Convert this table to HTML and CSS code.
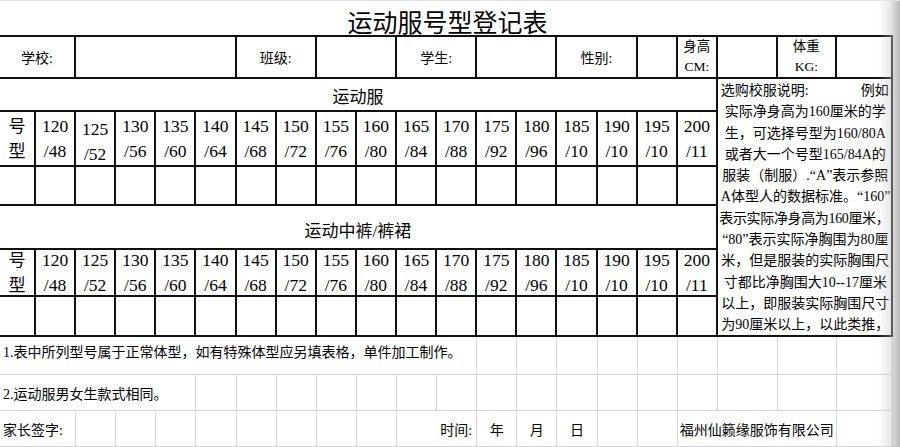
FILE: index.html
```html
<!DOCTYPE html>
<html lang="zh-CN">
<head>
<meta charset="utf-8">
<title>运动服号型登记表</title>
<link rel="stylesheet" href="styles.css">
</head>
<body>
<div class="page">
  <div class="sheet">
    <div class="title">运动服号型登记表</div>

    <div class="c b s2 lbl">学校:</div>
    <div class="c b s4"></div>
    <div class="c b s2 lbl">班级:</div>
    <div class="c b s2"></div>
    <div class="c b s2 lbl">学生:</div>
    <div class="c b s2"></div>
    <div class="c b s2 lbl">性别:</div>
    <div class="c b"></div>
    <div class="c b two"><span>身高</span><span>CM:</span></div>
    <div class="c b"></div>
    <div class="c b two"><span>体重</span><span>KG:</span></div>
    <div class="c b"></div>

    <div class="panel">
      <div class="pl first"><span>选购校服说明:</span><span>例如</span></div>
      <div class="pl">实际净身高为160厘米的学</div>
      <div class="pl">生，可选择号型为160/80A</div>
      <div class="pl">或者大一个号型165/84A的</div>
      <div class="pl">服装（制服）.&ldquo;A&rdquo;表示参照</div>
      <div class="pl">A体型人的数据标准。&ldquo;160&rdquo;</div>
      <div class="pl tight">表示实际净身高为160厘米，</div>
      <div class="pl">&ldquo;80&rdquo;表示实际净胸围为80厘</div>
      <div class="pl">米，但是服装的实际胸围尺</div>
      <div class="pl">寸都比净胸围大10--17厘米</div>
      <div class="pl">以上，即服装实际胸围尺寸</div>
      <div class="pl">为90厘米以上，以此类推，</div>
    </div>

    <div class="c b s18 sec">运动服</div>

    <div class="c b two hx"><span>号</span><span>型</span></div>
    <div class="c b two sz"><span>120</span><span>/48</span></div>
    <div class="c b two sz lo"><span>125</span><span>/52</span></div>
    <div class="c b two sz"><span>130</span><span>/56</span></div>
    <div class="c b two sz"><span>135</span><span>/60</span></div>
    <div class="c b two sz"><span>140</span><span>/64</span></div>
    <div class="c b two sz"><span>145</span><span>/68</span></div>
    <div class="c b two sz"><span>150</span><span>/72</span></div>
    <div class="c b two sz"><span>155</span><span>/76</span></div>
    <div class="c b two sz"><span>160</span><span>/80</span></div>
    <div class="c b two sz"><span>165</span><span>/84</span></div>
    <div class="c b two sz"><span>170</span><span>/88</span></div>
    <div class="c b two sz"><span>175</span><span>/92</span></div>
    <div class="c b two sz"><span>180</span><span>/96</span></div>
    <div class="c b two sz"><span>185</span><span>/10</span></div>
    <div class="c b two sz"><span>190</span><span>/10</span></div>
    <div class="c b two sz"><span>195</span><span>/10</span></div>
    <div class="c b two sz"><span>200</span><span>/11</span></div>

    <div class="c b"></div><div class="c b"></div><div class="c b"></div><div class="c b"></div><div class="c b"></div><div class="c b"></div>
    <div class="c b"></div><div class="c b"></div><div class="c b"></div><div class="c b"></div><div class="c b"></div><div class="c b"></div>
    <div class="c b"></div><div class="c b"></div><div class="c b"></div><div class="c b"></div><div class="c b"></div><div class="c b"></div>

    <div class="c b s18 sec sec2">运动中裤/裤裙</div>

    <div class="c b two hx"><span>号</span><span>型</span></div>
    <div class="c b two sz"><span>120</span><span>/48</span></div>
    <div class="c b two sz"><span>125</span><span>/52</span></div>
    <div class="c b two sz"><span>130</span><span>/56</span></div>
    <div class="c b two sz"><span>135</span><span>/60</span></div>
    <div class="c b two sz"><span>140</span><span>/64</span></div>
    <div class="c b two sz"><span>145</span><span>/68</span></div>
    <div class="c b two sz"><span>150</span><span>/72</span></div>
    <div class="c b two sz"><span>155</span><span>/76</span></div>
    <div class="c b two sz"><span>160</span><span>/80</span></div>
    <div class="c b two sz"><span>165</span><span>/84</span></div>
    <div class="c b two sz"><span>170</span><span>/88</span></div>
    <div class="c b two sz"><span>175</span><span>/92</span></div>
    <div class="c b two sz"><span>180</span><span>/96</span></div>
    <div class="c b two sz"><span>185</span><span>/10</span></div>
    <div class="c b two sz"><span>190</span><span>/10</span></div>
    <div class="c b two sz"><span>195</span><span>/10</span></div>
    <div class="c b two sz"><span>200</span><span>/11</span></div>

    <div class="c b"></div><div class="c b"></div><div class="c b"></div><div class="c b"></div><div class="c b"></div><div class="c b"></div>
    <div class="c b"></div><div class="c b"></div><div class="c b"></div><div class="c b"></div><div class="c b"></div><div class="c b"></div>
    <div class="c b"></div><div class="c b"></div><div class="c b"></div><div class="c b"></div><div class="c b"></div><div class="c b"></div>

    <div class="c g s12 note n1">1.表中所列型号属于正常体型，如有特殊体型应另填表格，单件加工制作。</div>
    <div class="c g"></div><div class="c g"></div><div class="c g"></div><div class="c g"></div><div class="c g"></div>
    <div class="c g"></div><div class="c g"></div><div class="c g"></div><div class="c g"></div>

    <div class="c g s5 note">2.运动服男女生款式相同。</div>
    <div class="c g"></div><div class="c g"></div><div class="c g"></div><div class="c g"></div>
    <div class="c g"></div><div class="c g"></div><div class="c g"></div><div class="c g"></div>
    <div class="c g"></div><div class="c g"></div><div class="c g"></div><div class="c g"></div>
    <div class="c g"></div><div class="c g"></div><div class="c g"></div><div class="c g"></div>

    <div class="c g s2 note">家长签字:</div>
    <div class="c g"></div><div class="c g"></div><div class="c g"></div><div class="c g"></div>
    <div class="c g"></div><div class="c g"></div><div class="c g"></div><div class="c g"></div>
    <div class="c g s2 note rt">时间:</div>
    <div class="c g mid">年</div>
    <div class="c g mid">月</div>
    <div class="c g mid">日</div>
    <div class="c g"></div>
    <div class="c g"></div>
    <div class="c g s3 note co">福州仙籁缘服饰有限公司</div>
    <div class="c g"></div>
  </div>
  <div class="shade"></div>
</div>
</body>
</html>
```

FILE: styles.css
```css
* { box-sizing: border-box; }

html, body {
  margin: 0;
  padding: 0;
  background: #fff;
}

.page {
  position: relative;
  width: 900px;
  height: 447px;
  overflow: hidden;
  border-top: 1px solid #e2e2e2;
}

.sheet {
  display: grid;
  grid-template-columns: 36px repeat(17, 40.12px) 60px 59px 56px;
  grid-template-rows: 36px 42px 33px 55px 39px 44px 47px 40px 38px 36px 36px;
  width: 893px;
  font-family: "Liberation Serif", "Noto Sans CJK SC", serif;
  color: #000;
}

.title {
  grid-column: 1 / -1;
  font-family: "Noto Sans CJK SC", sans-serif;
  font-size: 25px;
  line-height: 36px;
  text-align: center;
  padding-left: 2px;
  padding-top: 2px;
  border-bottom: 2px solid #111;
}

.c {
  display: flex;
  align-items: center;
  justify-content: center;
  min-width: 0;
}

.b {
  border-right: 2px solid #111;
  border-bottom: 2px solid #111;
}

.g {
  border-right: 1px solid #d6d6d6;
  border-bottom: 1px solid #d6d6d6;
}

.s2 { grid-column: span 2; }
.s3 { grid-column: span 3; }
.s4 { grid-column: span 4; }
.s5 { grid-column: span 5; }
.s12 { grid-column: span 12; }
.s18 { grid-column: span 18; }

.lbl {
  font-size: 14px;
}

.two {
  flex-direction: column;
  font-size: 13.5px;
  line-height: 20px;
}

.sec {
  font-size: 17px;
  padding-top: 2px;
}

.sec2 {
  padding-top: 4px;
}

.hx {
  font-size: 17px;
  line-height: 25px;
  padding-top: 1px;
}

.sz {
  font-family: "Liberation Serif", serif;
  font-size: 17.5px;
  line-height: 25px;
  padding-top: 1px;
}

.sz.lo {
  padding-top: 6px;
}

.panel {
  grid-column: 19 / 22;
  grid-row: 3 / 9;
  border-right: 2px solid #111;
  border-bottom: 2px solid #111;
  padding: 1px 1px 0 3px;
  font-size: 14px;
  line-height: 21.3px;
}

.pl {
  text-align: center;
  white-space: nowrap;
}

.pl.tight {
  letter-spacing: -0.35px;
  margin-left: -2px;
}

.pl.first {
  display: flex;
  justify-content: space-between;
  padding-right: 1px;
}

.note {
  justify-content: flex-start;
  font-size: 14px;
  padding-left: 3px;
  white-space: nowrap;
  overflow: visible;
  position: relative;
  z-index: 1;
}

.n1 {
  padding-bottom: 10px;
}

.rt {
  justify-content: flex-end;
  padding-right: 4px;
}

.mid {
  font-size: 14px;
}

.co {
  padding-left: 2px;
}

.shade {
  position: absolute;
  top: 0;
  right: 0;
  width: 22px;
  height: 100%;
  background: linear-gradient(to right, rgba(190, 190, 190, 0) 0%, rgba(190, 190, 190, 0.35) 55%, rgba(170, 170, 170, 0.85) 100%);
  pointer-events: none;
}
```
